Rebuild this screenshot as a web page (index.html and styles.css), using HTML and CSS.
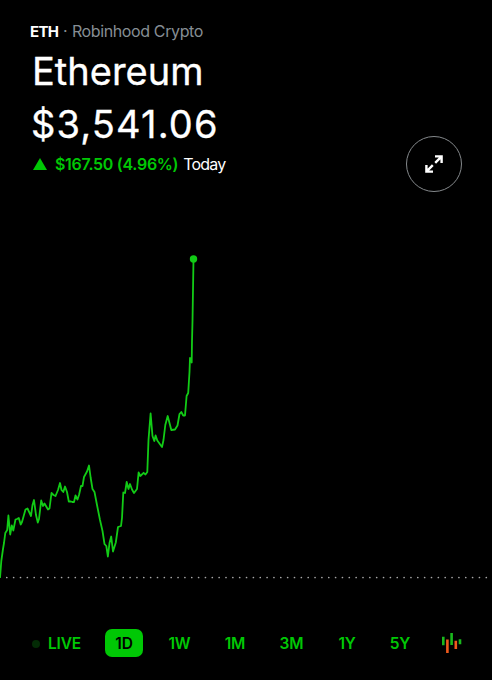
FILE: index.html
```html
<!DOCTYPE html>
<html lang="en">
<head>
    <meta charset="UTF-8">
    <meta name="viewport" content="width=device-width, initial-scale=1.0">
    <title>Ethereum</title>
    <link rel="stylesheet" href="styles.css">
</head>
<body>
    <div class="container">
        <header class="header">
            <div class="quote">
                <div class="symbol"><b>ETH</b> <span class="dot">·</span> <span class="source">Robinhood Crypto</span></div>
                <h1 class="name">Ethereum</h1>
                <div class="price">$3,541.06</div>
                <div class="change">
                    <svg class="arrow" width="14" height="12" viewBox="0 0 14 12"><path d="M7 0L14 12H0Z"/></svg>
                    <span class="amount">$167.50 (4.96%)</span>
                    <span class="today">Today</span>
                </div>
            </div>
            <button class="expand" aria-label="Expand chart">
                <svg width="18" height="18" viewBox="0 0 18 18">
                    <path d="M10 1.4H16.6V8M16.4 1.6L10.2 7.8M8 16.6H1.4V10M1.6 16.4L7.8 10.2"/>
                </svg>
            </button>
        </header>

        <svg class="chart" width="492" height="350" viewBox="0 240 492 350">
            <line class="baseline" x1="6.8" y1="577.5" x2="492" y2="577.5"/>
            <polyline class="line" points="0,578 1.3,561 3,549 4,543 5.3,533 7.2,530 8.4,515.5 10.2,534.5 11.8,525.5 13.3,530.5 15.5,519.5 17,519 18.8,518 20.7,524.5 22,522 25.5,509.5 27.5,508.5 31,516 32.5,505 34,500 36,515 37.8,522.5 39,519 41.2,500.5 43,506 44.5,503.5 48,509.5 49.5,508.5 51.5,493 53.5,495 55.5,496 58,490 60,483 61.5,490 63.3,492 65,486.5 67,492 68.8,501.5 71,501.5 72.3,502 74,502 75.5,495.5 77.5,499.5 79,495 81,486 82.5,486 84,477 87,471.5 89,465.5 90.7,478 92.5,489 94.5,492 97,505 100,520 102.5,531 104.5,544 106.3,546 107.9,556.5 109.5,543 111.2,536.5 113,551.5 115.8,542.5 118,527 121,526 122,518 123.3,492.5 125,493 126.7,482 128.5,489 130,484 132,489.5 134,493 137,489 138.6,472.5 140.3,476 143.6,472.8 145.5,474.5 147.3,472 148.5,440 150.6,413.5 152.5,436 154.3,441 155.6,435.5 157.3,440.5 162,447 163.5,440 165.3,425 167.7,416 169.5,423 171.3,430 175,429.5 177.5,425.5 179.5,414 181.3,412 183.2,415.5 185,415.5 186.6,396 188.2,393 189.5,372 190,358 191.7,362.5 192,341 192.5,321 193.5,259"/>
            <circle class="point" cx="193.5" cy="259" r="3.7"/>
        </svg>

        <nav class="ranges">
            <button class="range live"><i class="pulse"></i>LIVE</button>
            <button class="range active">1D</button>
            <button class="range">1W</button>
            <button class="range">1M</button>
            <button class="range">3M</button>
            <button class="range">1Y</button>
            <button class="range">5Y</button>
            <button class="range candles" aria-label="Candlestick chart">
                <svg width="20" height="22" viewBox="0 0 20 22">
                    <path class="up" d="M1.3 4.8v8.4M9.6 1v12M18 7.3v5"/>
                    <path class="down" d="M5.4 7.4v13.6M13.8 8.7v8.3"/>
                </svg>
            </button>
        </nav>
    </div>
</body>
</html>
```

FILE: styles.css
```css
body {
    margin: 0;
    background-color: #000;
    color: #fff;
    font-family: Inter, "Liberation Sans", sans-serif;
}

.container {
    display: flex;
    flex-direction: column;
    width: 492px;
    height: 680px;
    overflow: hidden;
}

.header {
    display: flex;
    justify-content: space-between;
    align-items: flex-end;
    box-sizing: border-box;
    height: 192px;
    padding: 21px 30px 0 30px;
}

.quote {
    height: 171px;
    white-space: nowrap;
}

.symbol {
    font-size: 16px;
    line-height: 20px;
    letter-spacing: -0.38px;
}

.symbol b {
    font-size: 15px;
    font-weight: 700;
    letter-spacing: -0.7px;
}

.dot {
    margin: 0 0.6px;
}

.dot,
.source {
    color: #868e94;
}

.name {
    margin: 3px 0 0 2px;
    font-size: 38px;
    font-weight: 400;
    line-height: 52px;
    -webkit-text-stroke: 0.3px #fff;
}

.price {
    margin-left: 1px;
    font-size: 38px;
    line-height: 54px;
    letter-spacing: 1.15px;
    -webkit-text-stroke: 0.3px #fff;
}

.change {
    display: flex;
    align-items: center;
    height: 26px;
    font-size: 16px;
}

.arrow {
    margin: 0 8px 0 3px;
    fill: #00c805;
}

.amount {
    margin-right: 5px;
    color: #00c805;
    font-weight: 600;
    letter-spacing: -0.3px;
}

.today {
    letter-spacing: -0.8px;
}

button {
    padding: 0;
    border: none;
    background: none;
    font-family: inherit;
    cursor: pointer;
}

.expand {
    display: flex;
    justify-content: center;
    align-items: center;
    box-sizing: border-box;
    width: 56px;
    height: 56px;
    border: 1px solid #85898c;
    border-radius: 50%;
}

.expand path {
    fill: none;
    stroke: #fff;
    stroke-width: 2.4;
}

.chart {
    display: block;
    margin-top: 48px;
}

.baseline {
    stroke: #a8a8a8;
    stroke-width: 1.7;
    stroke-linecap: round;
    stroke-dasharray: 0 6.85;
}

.line {
    fill: none;
    stroke: #12cb16;
    stroke-width: 1.8;
    stroke-linejoin: round;
}

.point {
    fill: #12cb16;
}

.ranges {
    display: grid;
    grid-template-columns: 64px 56px 55px 56px 57px 54px 52px 52px;
    justify-items: center;
    align-items: center;
    height: 28px;
    margin-top: 39px;
    padding-left: 32px;
}

.range {
    box-sizing: border-box;
    height: 28px;
    padding-top: 1px;
    color: #00c805;
    font-size: 15.5px;
    font-weight: 600;
    line-height: 27px;
    letter-spacing: -0.2px;
}

.live {
    display: flex;
    justify-self: start;
    align-items: center;
}

.pulse {
    width: 8px;
    height: 8px;
    margin-right: 8px;
    border-radius: 50%;
    background-color: #032b05;
}

.active {
    width: 38px;
    border-radius: 7px;
    background-color: #00c805;
    color: #000;
}

.candles {
    display: flex;
    align-items: center;
    padding: 0;
}

.candles path {
    stroke-width: 2.6;
}

.up {
    stroke: #19b91c;
}

.down {
    stroke: #f05a1c;
}
```
